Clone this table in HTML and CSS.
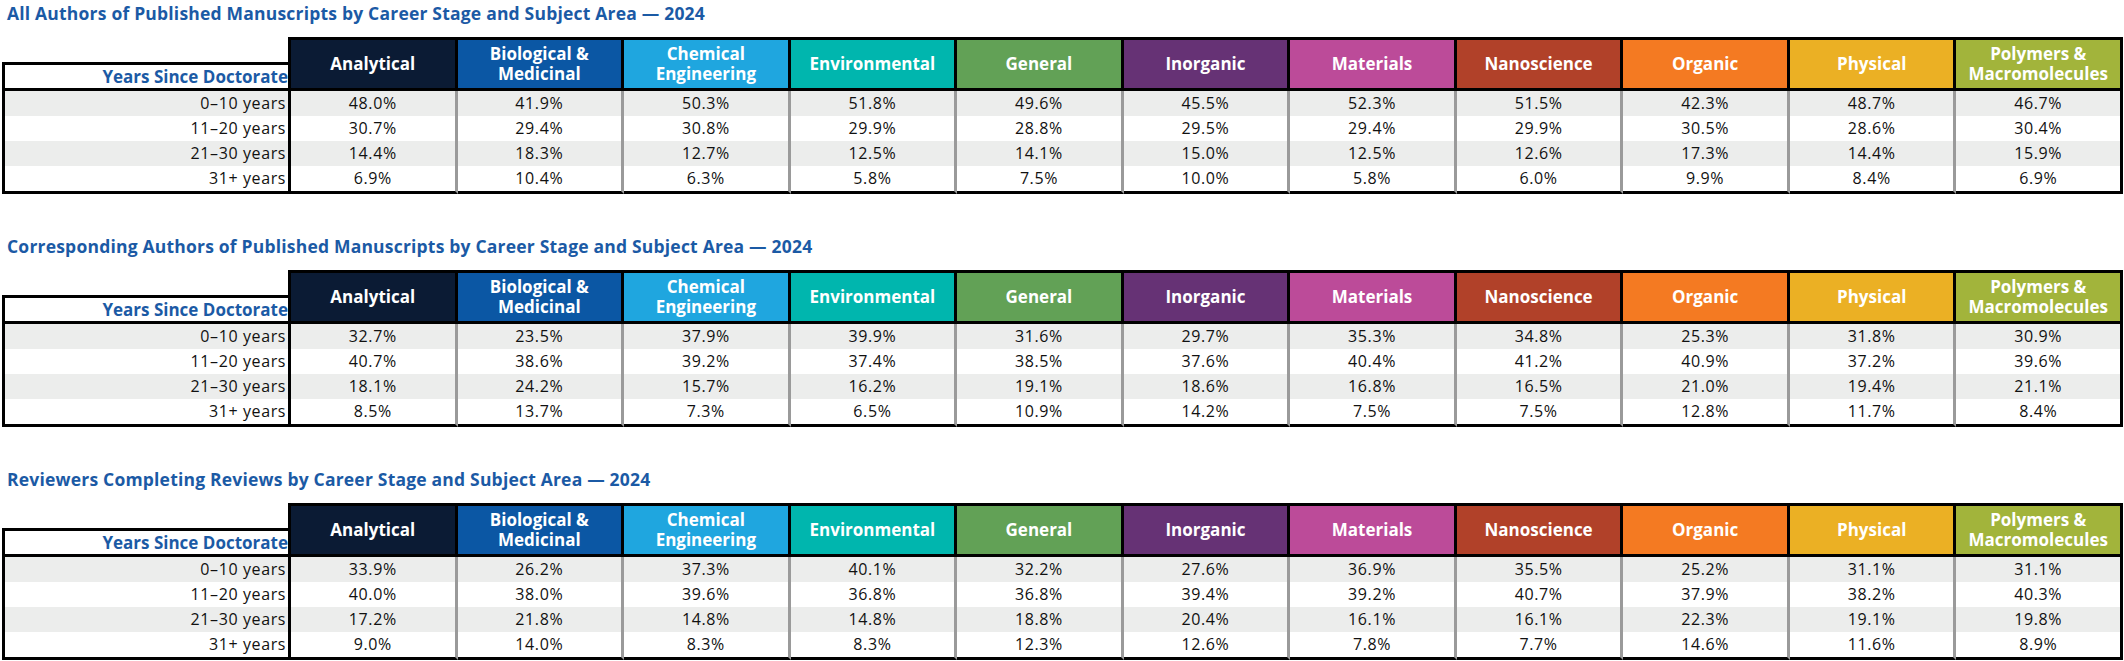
FILE: index.html
```html
<!DOCTYPE html>
<html>
<head>
<meta charset="utf-8">
<link rel="stylesheet" href="styles.css">
</head>
<body>

<section class="block">
  <h2 class="title">All Authors of Published Manuscripts by Career Stage and Subject Area — 2024</h2>
  <div class="tbl">
    <div class="corner"><div class="lbl">Years Since Doctorate</div></div>
    <div class="hd c1">Analytical</div>
    <div class="hd c2">Biological &amp;<br>Medicinal</div>
    <div class="hd c3">Chemical<br>Engineering</div>
    <div class="hd c4">Environmental</div>
    <div class="hd c5">General</div>
    <div class="hd c6">Inorganic</div>
    <div class="hd c7">Materials</div>
    <div class="hd c8">Nanoscience</div>
    <div class="hd c9">Organic</div>
    <div class="hd c10">Physical</div>
    <div class="hd c11">Polymers &amp;<br>Macromolecules</div>

    <div class="row odd"><div class="rl">0–10 years</div><div class="v">48.0%</div><div class="v">41.9%</div><div class="v">50.3%</div><div class="v">51.8%</div><div class="v">49.6%</div><div class="v">45.5%</div><div class="v">52.3%</div><div class="v">51.5%</div><div class="v">42.3%</div><div class="v">48.7%</div><div class="v">46.7%</div></div>
    <div class="row"><div class="rl">11–20 years</div><div class="v">30.7%</div><div class="v">29.4%</div><div class="v">30.8%</div><div class="v">29.9%</div><div class="v">28.8%</div><div class="v">29.5%</div><div class="v">29.4%</div><div class="v">29.9%</div><div class="v">30.5%</div><div class="v">28.6%</div><div class="v">30.4%</div></div>
    <div class="row odd"><div class="rl">21–30 years</div><div class="v">14.4%</div><div class="v">18.3%</div><div class="v">12.7%</div><div class="v">12.5%</div><div class="v">14.1%</div><div class="v">15.0%</div><div class="v">12.5%</div><div class="v">12.6%</div><div class="v">17.3%</div><div class="v">14.4%</div><div class="v">15.9%</div></div>
    <div class="row last"><div class="rl">31+ years</div><div class="v">6.9%</div><div class="v">10.4%</div><div class="v">6.3%</div><div class="v">5.8%</div><div class="v">7.5%</div><div class="v">10.0%</div><div class="v">5.8%</div><div class="v">6.0%</div><div class="v">9.9%</div><div class="v">8.4%</div><div class="v">6.9%</div></div>
  </div>
</section>

<section class="block">
  <h2 class="title">Corresponding Authors of Published Manuscripts by Career Stage and Subject Area — 2024</h2>
  <div class="tbl">
    <div class="corner"><div class="lbl">Years Since Doctorate</div></div>
    <div class="hd c1">Analytical</div>
    <div class="hd c2">Biological &amp;<br>Medicinal</div>
    <div class="hd c3">Chemical<br>Engineering</div>
    <div class="hd c4">Environmental</div>
    <div class="hd c5">General</div>
    <div class="hd c6">Inorganic</div>
    <div class="hd c7">Materials</div>
    <div class="hd c8">Nanoscience</div>
    <div class="hd c9">Organic</div>
    <div class="hd c10">Physical</div>
    <div class="hd c11">Polymers &amp;<br>Macromolecules</div>

    <div class="row odd"><div class="rl">0–10 years</div><div class="v">32.7%</div><div class="v">23.5%</div><div class="v">37.9%</div><div class="v">39.9%</div><div class="v">31.6%</div><div class="v">29.7%</div><div class="v">35.3%</div><div class="v">34.8%</div><div class="v">25.3%</div><div class="v">31.8%</div><div class="v">30.9%</div></div>
    <div class="row"><div class="rl">11–20 years</div><div class="v">40.7%</div><div class="v">38.6%</div><div class="v">39.2%</div><div class="v">37.4%</div><div class="v">38.5%</div><div class="v">37.6%</div><div class="v">40.4%</div><div class="v">41.2%</div><div class="v">40.9%</div><div class="v">37.2%</div><div class="v">39.6%</div></div>
    <div class="row odd"><div class="rl">21–30 years</div><div class="v">18.1%</div><div class="v">24.2%</div><div class="v">15.7%</div><div class="v">16.2%</div><div class="v">19.1%</div><div class="v">18.6%</div><div class="v">16.8%</div><div class="v">16.5%</div><div class="v">21.0%</div><div class="v">19.4%</div><div class="v">21.1%</div></div>
    <div class="row last"><div class="rl">31+ years</div><div class="v">8.5%</div><div class="v">13.7%</div><div class="v">7.3%</div><div class="v">6.5%</div><div class="v">10.9%</div><div class="v">14.2%</div><div class="v">7.5%</div><div class="v">7.5%</div><div class="v">12.8%</div><div class="v">11.7%</div><div class="v">8.4%</div></div>
  </div>
</section>

<section class="block">
  <h2 class="title">Reviewers Completing Reviews by Career Stage and Subject Area — 2024</h2>
  <div class="tbl">
    <div class="corner"><div class="lbl">Years Since Doctorate</div></div>
    <div class="hd c1">Analytical</div>
    <div class="hd c2">Biological &amp;<br>Medicinal</div>
    <div class="hd c3">Chemical<br>Engineering</div>
    <div class="hd c4">Environmental</div>
    <div class="hd c5">General</div>
    <div class="hd c6">Inorganic</div>
    <div class="hd c7">Materials</div>
    <div class="hd c8">Nanoscience</div>
    <div class="hd c9">Organic</div>
    <div class="hd c10">Physical</div>
    <div class="hd c11">Polymers &amp;<br>Macromolecules</div>

    <div class="row odd"><div class="rl">0–10 years</div><div class="v">33.9%</div><div class="v">26.2%</div><div class="v">37.3%</div><div class="v">40.1%</div><div class="v">32.2%</div><div class="v">27.6%</div><div class="v">36.9%</div><div class="v">35.5%</div><div class="v">25.2%</div><div class="v">31.1%</div><div class="v">31.1%</div></div>
    <div class="row"><div class="rl">11–20 years</div><div class="v">40.0%</div><div class="v">38.0%</div><div class="v">39.6%</div><div class="v">36.8%</div><div class="v">36.8%</div><div class="v">39.4%</div><div class="v">39.2%</div><div class="v">40.7%</div><div class="v">37.9%</div><div class="v">38.2%</div><div class="v">40.3%</div></div>
    <div class="row odd"><div class="rl">21–30 years</div><div class="v">17.2%</div><div class="v">21.8%</div><div class="v">14.8%</div><div class="v">14.8%</div><div class="v">18.8%</div><div class="v">20.4%</div><div class="v">16.1%</div><div class="v">16.1%</div><div class="v">22.3%</div><div class="v">19.1%</div><div class="v">19.8%</div></div>
    <div class="row last"><div class="rl">31+ years</div><div class="v">9.0%</div><div class="v">14.0%</div><div class="v">8.3%</div><div class="v">8.3%</div><div class="v">12.3%</div><div class="v">12.6%</div><div class="v">7.8%</div><div class="v">7.7%</div><div class="v">14.6%</div><div class="v">11.6%</div><div class="v">8.9%</div></div>
  </div>
</section>

</body>
</html>
```

FILE: styles.css
```css
* { box-sizing: border-box; }

html, body {
  margin: 0;
  padding: 0;
  background: #ffffff;
}

body {
  font-family: "Open Sans", Lato, "Liberation Sans", sans-serif;
  color: #111111;
  width: 2124px;
  overflow: hidden;
}

.block {
  height: 233px;
}

.block:last-child {
  height: auto;
}

.title {
  margin: 0;
  height: 37px;
  padding: 3px 0 0 7px;
  font-size: 17.5px;
  line-height: 20px;
  font-weight: 700;
  letter-spacing: 0.2px;
  color: #1b5aa5;
}

.tbl {
  display: grid;
  grid-template-columns: 289px repeat(11, 1fr);
  width: 2121px;
  margin-left: 2px;
}

.corner {
  height: 54px;
  border-right: 3px solid #000;
  display: flex;
  align-items: flex-end;
}

.lbl {
  width: 100%;
  height: 29px;
  border-top: 3px solid #000;
  border-left: 3px solid #000;
  border-bottom: 3px solid #000;
  text-align: right;
  padding-right: 0;
  font-size: 17px;
  line-height: 24px;
  font-weight: 700;
  color: #1b5aa5;
  white-space: nowrap;
}

.hd {
  height: 54px;
  border-top: 3px solid #000;
  border-bottom: 3px solid #000;
  border-right: 3px solid #000;
  display: flex;
  align-items: center;
  justify-content: center;
  text-align: center;
  color: #ffffff;
  font-weight: 700;
  font-size: 17px;
  line-height: 20px;
}

.c1 { background: #0b1b34; }
.c2 { background: #0b57a4; }
.c3 { background: #1fa6df; }
.c4 { background: #00b6ae; }
.c5 { background: #62a156; }
.c6 { background: #663275; }
.c7 { background: #bc4b99; }
.c8 { background: #b14129; }
.c9 { background: #f47a22; }
.c10 { background: #ebb024; }
.c11 { background: #a2b43b; }

.row {
  display: contents;
}

.rl, .v {
  height: 25px;
  font-size: 16px;
  letter-spacing: 0.6px;
  line-height: 25px;
  background: #ffffff;
}

.odd > .rl, .odd > .v {
  background: #ecedec;
}

.rl {
  border-left: 3px solid #000;
  border-right: 3px solid #000;
  text-align: right;
  padding-right: 2px;
}

.v {
  text-align: center;
  border-right: 3px solid #9a9a9a;
}

.v:last-child {
  border-right-color: #000;
}

.last > .rl, .last > .v {
  height: 28px;
  border-bottom: 3px solid #000;
}
```
